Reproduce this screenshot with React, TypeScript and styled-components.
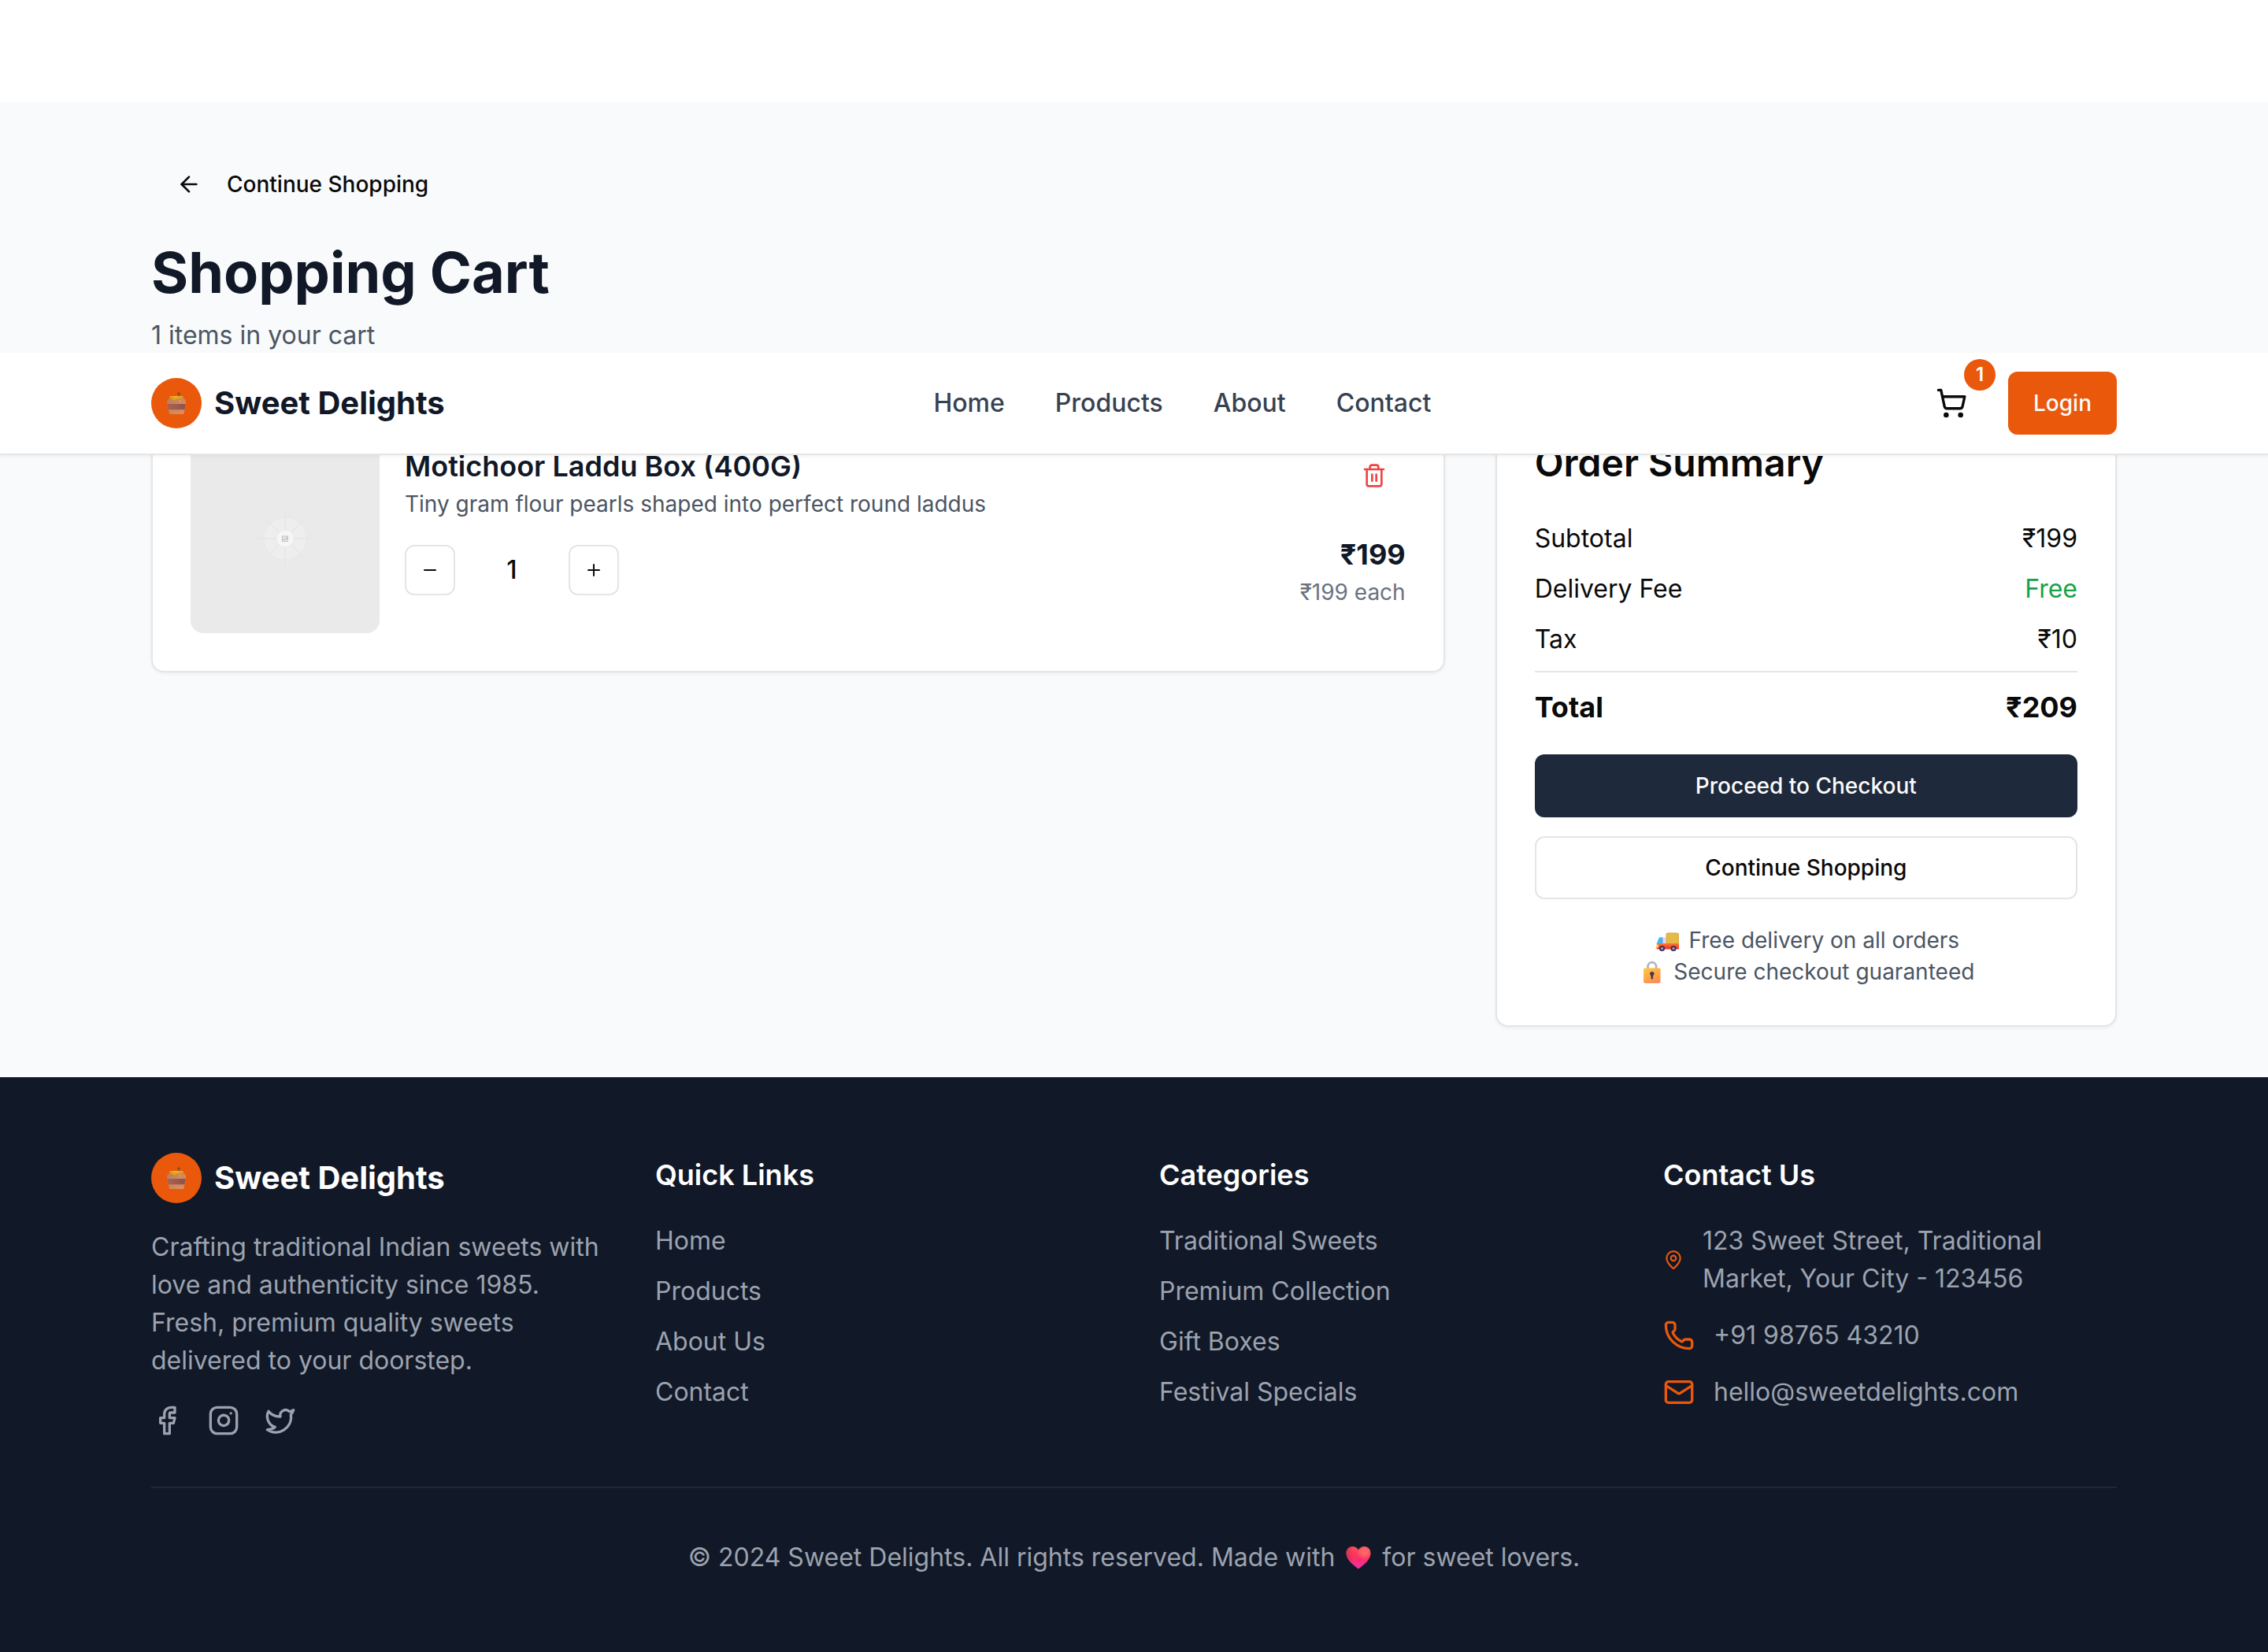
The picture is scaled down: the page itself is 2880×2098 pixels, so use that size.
import React from 'react';
import styled, { createGlobalStyle } from 'styled-components';
import {
  ArrowLeft,
  Facebook,
  Instagram,
  Mail,
  MapPin,
  Minus,
  Phone,
  Plus,
  ShoppingCart,
  Trash2,
  Twitter,
} from 'lucide-react';

const color = {
  ink: '#111827',
  text: '#0a0a0a',
  slate: '#374151',
  muted: '#4b5563',
  soft: '#6b7280',
  faint: '#9ca3af',
  line: '#e5e5e5',
  page: '#f9fafb',
  orange: '#ea580c',
  green: '#16a34a',
  red: '#ef4444',
  navy: '#1e293b',
};

const GlobalStyle = createGlobalStyle`
  *, *::before, *::after { box-sizing: border-box; }
  body {
    margin: 0;
    background: #ffffff;
    color: ${color.text};
    font-family: Inter, "Noto Sans", sans-serif;
    font-size: 32px;
    line-height: 48px;
  }
  h1, h2, h3, p, ul, dl, dd { margin: 0; padding: 0; }
  ul { list-style: none; }
  a { color: inherit; text-decoration: none; }
  button { font-family: inherit; cursor: pointer; }
  svg { display: block; flex-shrink: 0; }
`;

const Page = styled.div`
  position: relative;
  padding-top: 130px;
`;

const Container = styled.div`
  max-width: 2560px;
  margin: 0 auto;
  padding: 0 32px;
`;

/* Header, pinned over the cart while the page is scrolled */

const HeaderBar = styled.header`
  position: absolute;
  top: 448px;
  left: 0;
  right: 0;
  z-index: 10;
  background: #ffffff;
  border-bottom: 2px solid ${color.line};
  box-shadow: 0 2px 4px rgba(0, 0, 0, 0.05);
`;

const HeaderRow = styled(Container)`
  display: flex;
  align-items: center;
  justify-content: space-between;
  height: 128px;
`;

const Brand = styled.a<{ $light?: boolean }>`
  display: flex;
  align-items: center;
  gap: 16px;
  font-size: 40px;
  line-height: 56px;
  font-weight: 700;
  color: ${(p) => (p.$light ? '#ffffff' : color.ink)};
`;

const BrandMark = styled.span`
  display: flex;
  align-items: center;
  justify-content: center;
  width: 64px;
  height: 64px;
  border-radius: 50%;
  background: ${color.orange};
`;

const Nav = styled.nav`
  display: flex;
  gap: 64px;
  font-weight: 500;
  color: ${color.slate};
`;

const Actions = styled.div`
  display: flex;
  align-items: center;
  gap: 32px;
`;

const CartButton = styled.button`
  position: relative;
  display: flex;
  align-items: center;
  justify-content: center;
  width: 80px;
  height: 80px;
  padding: 0;
  border: 0;
  border-radius: 12px;
  background: transparent;
  color: ${color.text};
`;

const CartBadge = styled.span`
  position: absolute;
  top: -16px;
  right: -16px;
  display: flex;
  align-items: center;
  justify-content: center;
  width: 40px;
  height: 40px;
  border-radius: 50%;
  background: ${color.orange};
  color: #ffffff;
  font-size: 24px;
  line-height: 32px;
  font-weight: 600;
`;

/* Buttons */

type Tone = 'accent' | 'dark' | 'outline' | 'ghost';

const toneBackground: Record<Tone, string> = {
  accent: color.orange,
  dark: color.navy,
  outline: '#ffffff',
  ghost: 'transparent',
};

const Button = styled.button<{ $tone: Tone; $block?: boolean }>`
  display: flex;
  align-items: center;
  justify-content: center;
  gap: 32px;
  width: ${(p) => (p.$block ? '100%' : 'auto')};
  height: 80px;
  padding: 0 32px;
  border: ${(p) => (p.$tone === 'outline' ? `2px solid ${color.line}` : '0')};
  border-radius: 12px;
  background: ${(p) => toneBackground[p.$tone]};
  color: ${(p) => (p.$tone === 'accent' || p.$tone === 'dark' ? '#fafafa' : color.text)};
  font-size: 28px;
  line-height: 40px;
  font-weight: 500;
`;

const IconButton = styled.button<{ $small?: boolean }>`
  display: flex;
  align-items: center;
  justify-content: center;
  width: ${(p) => (p.$small ? '64px' : '80px')};
  height: ${(p) => (p.$small ? '64px' : '80px')};
  padding: 0;
  border: ${(p) => (p.$small ? `2px solid ${color.line}` : '0')};
  border-radius: 12px;
  background: #ffffff;
  color: ${(p) => (p.$small ? color.text : color.red)};
`;

/* Cart page */

const Main = styled.main`
  padding: 64px 0;
  background: ${color.page};
`;

const Intro = styled.div`
  display: flex;
  flex-direction: column;
  align-items: flex-start;
  margin-bottom: 64px;
`;

const Title = styled.h1`
  margin: 32px 0 16px;
  font-size: 72px;
  line-height: 80px;
  font-weight: 700;
  color: ${color.ink};
`;

const Count = styled.p`
  color: ${color.muted};
`;

const Columns = styled.div`
  display: grid;
  grid-template-columns: repeat(3, minmax(0, 1fr));
  align-items: start;
  gap: 64px;
`;

const Card = styled.section<{ $span?: number }>`
  grid-column: span ${(p) => p.$span ?? 1};
  padding: 48px;
  border: 2px solid ${color.line};
  border-radius: 16px;
  background: #ffffff;
  box-shadow: 0 2px 4px rgba(0, 0, 0, 0.05);
`;

const Item = styled.article`
  display: flex;
  gap: 32px;
`;

const Thumb = styled.div`
  flex-shrink: 0;
  width: 240px;
  height: 240px;
  overflow: hidden;
  border-radius: 16px;
`;

const ItemBody = styled.div`
  flex: 1;
  display: flex;
  flex-direction: column;
  gap: 16px;
`;

const Split = styled.div<{ $align?: string }>`
  display: flex;
  align-items: ${(p) => p.$align ?? 'center'};
  justify-content: space-between;
`;

const ItemName = styled.h3`
  font-size: 36px;
  line-height: 56px;
  font-weight: 600;
  color: ${color.ink};
`;

const SmallText = styled.p<{ $tone?: string }>`
  font-size: 28px;
  line-height: 40px;
  color: ${(p) => p.$tone ?? color.muted};
`;

const Stepper = styled.div`
  display: flex;
  align-items: center;
  gap: 24px;
`;

const Quantity = styled.output`
  width: 96px;
  text-align: center;
  font-weight: 500;
`;

const Prices = styled.div`
  text-align: right;
`;

const Price = styled.p`
  font-size: 36px;
  line-height: 56px;
  font-weight: 700;
  color: ${color.ink};
`;

const SummaryTitle = styled.h2`
  margin-bottom: 48px;
  font-size: 48px;
  line-height: 48px;
  font-weight: 600;
`;

const Lines = styled.dl`
  display: flex;
  flex-direction: column;
  gap: 16px;
  margin-bottom: 32px;
`;

const Amount = styled.dd<{ $free?: boolean }>`
  color: ${(p) => (p.$free ? color.green : 'inherit')};
`;

const TotalLine = styled(Split)`
  padding-top: 16px;
  border-top: 2px solid ${color.line};
  font-size: 36px;
  line-height: 56px;
  font-weight: 700;
`;

const Choices = styled.div`
  display: flex;
  flex-direction: column;
  gap: 24px;
  margin-bottom: 32px;
`;

const Assurance = styled(SmallText)`
  display: flex;
  align-items: center;
  justify-content: center;
  gap: 8px;
`;

/* Footer */

const FooterBar = styled.footer`
  padding: 96px 0;
  background: ${color.ink};
  color: ${color.faint};
`;

const FooterGrid = styled.div`
  display: grid;
  grid-template-columns: repeat(4, minmax(0, 1fr));
  gap: 64px;
`;

const About = styled.div`
  display: flex;
  flex-direction: column;
  gap: 32px;
`;

const Social = styled.div`
  display: flex;
  gap: 32px;
`;

const FooterHeading = styled.h3`
  margin-bottom: 32px;
  font-size: 36px;
  line-height: 56px;
  font-weight: 600;
  color: #ffffff;
`;

const FooterList = styled.ul<{ $gap: number }>`
  display: flex;
  flex-direction: column;
  gap: ${(p) => p.$gap}px;
`;

const ContactRow = styled.li`
  display: flex;
  align-items: center;
  gap: 24px;

  svg {
    color: ${color.orange};
  }
`;

const Copyright = styled.p`
  display: flex;
  align-items: center;
  justify-content: center;
  gap: 8px;
  margin-top: 64px;
  padding-top: 64px;
  border-top: 2px solid #1f2937;
`;

/* Drawings */

const HoneyPot = () => (
  <svg width="28" height="32" viewBox="0 0 28 32" aria-hidden="true">
    <defs>
      <linearGradient id="pot-clay" x1="0" y1="0" x2="1" y2="1">
        <stop offset="0" stopColor="#bd7a54" />
        <stop offset="0.5" stopColor="#cd865d" />
        <stop offset="1" stopColor="#dd9260" />
      </linearGradient>
      <linearGradient id="pot-band" x1="0" y1="0" x2="1" y2="0">
        <stop offset="0" stopColor="#a9634f" />
        <stop offset="1" stopColor="#91524d" />
      </linearGradient>
    </defs>
    <path d="M5.500 7h17.500v2.500c2 1.200 3 3 3 5.500 0 4.500-1.800 10.500-3 15H5.500C4.200 25.500 2 19.500 2 15c0-2.500 1.300-4.300 3.500-5.500z" fill="url(#pot-clay)" />
    <path d="M2.300 17h23.400c-.3 2.500-.8 4.800-1.400 7.200H3.900C3.200 21.800 2.600 19.500 2.300 17z" fill="url(#pot-band)" />
    <path d="M16.500 8V4.500" stroke="#9a5a30" strokeWidth="1.400" />
    <path d="M15.300 3.800c0-1 1-1.500 2-1.300 1.200.1 1.800 1 1.600 2-.2 1.100-1.200 1.600-2.200 1.400-1-.2-1.400-1.100-1.400-2.100z" fill="#8c4a24" />
    <path d="M5.500 7H22v1.500c0 1-1.200 1.500-2.700 1.500-1 0-1.200 1.200-2 1.200s-.8-1-2-1c-1 0-1.200 2.300-3.800 2.300-2 0-2-1.700-3.500-2C6.500 10.200 5.500 9.500 5.500 8z" fill="#e0a01c" />
    <path d="M9 7.300h9c-1 1.200-2.500 1.500-4.500 1.500S9.800 8.400 9 7.300z" fill="#f3bd28" />
    <path d="M18.700 11.500c.7.900 1 1.400 1 1.900a1 1 0 0 1-2 0c0-.5.300-1 1-1.900z" fill="#e9a922" />
  </svg>
);

const Truck = () => (
  <svg width="38" height="40" viewBox="0 0 38 40" aria-hidden="true">
    <defs>
      <linearGradient id="truck-chassis" x1="0" y1="0" x2="0" y2="1">
        <stop offset="0" stopColor="#ff7a2e" />
        <stop offset="1" stopColor="#ee2c34" />
      </linearGradient>
      <linearGradient id="truck-glass" x1="0" y1="0" x2="1" y2="1">
        <stop offset="0" stopColor="#2cc0ff" />
        <stop offset="1" stopColor="#5aa8f0" />
      </linearGradient>
    </defs>
    <path d="M8 16.500h9.500V26H4.500v-2z" fill="#e4d8ee" />
    <path d="M8 16.500h4.500V24H5z" fill="url(#truck-glass)" />
    <rect x="16.500" y="10.500" width="16.500" height="15" rx="2.500" fill="#dfb03c" />
    <rect x="18" y="12" width="13.500" height="12" rx="1" fill="#e6ba46" />
    <path d="M5 24h28v6.500a1 1 0 0 1-1 1H6a1.500 1.500 0 0 1-1.500-1.500z" fill="url(#truck-chassis)" />
    <rect x="4.500" y="25.500" width="2.500" height="4" rx="1" fill="#ffd84a" />
    <circle cx="11.500" cy="30.500" r="3.600" fill="#43304f" />
    <circle cx="11.500" cy="30.500" r="1.500" fill="#b9a6cc" />
    <circle cx="26" cy="30.500" r="3.600" fill="#43304f" />
    <circle cx="26" cy="30.500" r="1.500" fill="#b9a6cc" />
  </svg>
);

const Padlock = () => (
  <svg width="38" height="40" viewBox="0 0 38 40" aria-hidden="true">
    <defs>
      <linearGradient id="lock-body" x1="0" y1="0" x2="0.600" y2="1">
        <stop offset="0" stopColor="#ffcb3e" />
        <stop offset="1" stopColor="#ff8f4c" />
      </linearGradient>
    </defs>
    <path d="M13.500 17v-3.500a5.300 5.300 0 0 1 10.600 0V17" fill="none" stroke="#b9b2c2" strokeWidth="2.800" />
    <rect x="8" y="15.500" width="21.500" height="18.800" rx="1.800" fill="url(#lock-body)" />
    <path d="M9 33.800h19.500" stroke="#ef7444" strokeWidth="1" />
    <circle cx="18.800" cy="22.600" r="2.700" fill="#4a3550" />
    <rect x="17.500" y="23" width="2.600" height="6.400" rx="1.200" fill="#4a3550" />
  </svg>
);

const Heart = () => (
  <svg width="44" height="40" viewBox="0 0 44 40" role="img" aria-label="love">
    <defs>
      <linearGradient id="heart-fill" x1="0" y1="0" x2="0" y2="1">
        <stop offset="0" stopColor="#fb4e5c" />
        <stop offset="0.500" stopColor="#ff2f62" />
        <stop offset="1" stopColor="#ee2fae" />
      </linearGradient>
      <radialGradient id="heart-glow" cx="0.750" cy="0.250" r="0.350">
        <stop offset="0" stopColor="#ff7468" />
        <stop offset="1" stopColor="#ff7468" stopOpacity="0" />
      </radialGradient>
      <linearGradient id="heart-edge" x1="0" y1="0" x2="1" y2="0">
        <stop offset="0" stopColor="#b8304e" stopOpacity="0.700" />
        <stop offset="0.300" stopColor="#b8304e" stopOpacity="0" />
      </linearGradient>
    </defs>
    {['url(#heart-fill)', 'url(#heart-edge)', 'url(#heart-glow)'].map((fill) => (
      <path
        key={fill}
        d="M22 10.500c1.500-3 4.300-4.500 7.500-4.500 4.800 0 8 3.800 8 8.500 0 8.500-8.500 14.500-15.500 20C15 29 6.500 23 6.500 14.500c0-4.700 3.200-8.500 8-8.500 3.200 0 6 1.500 7.500 4.500z"
        fill={fill}
      />
    ))}
  </svg>
);

const PlaceholderPhoto = () => (
  <svg width="240" height="240" viewBox="0 0 240 240" role="img" aria-label="Motichoor Laddu Box (400G)">
    <defs>
      <radialGradient id="ray" gradientUnits="userSpaceOnUse" cx="120" cy="120" r="52">
        <stop offset="0.300" stopColor="#dedede" />
        <stop offset="0.550" stopColor="#e2e2e2" />
        <stop offset="1" stopColor="#e2e2e2" stopOpacity="0" />
      </radialGradient>
    </defs>
    <rect width="240" height="240" fill="#eaeaea" />
    <circle cx="120" cy="120" r="27" fill="#eeeeee" stroke="#e7e7e7" strokeWidth="0.800" />
    <path
      d="M82 120.010H158M120.010 82V158M82 82.010L158 158M158 82.010L82 158"
      stroke="url(#ray)"
      strokeWidth="0.900"
    />
    <circle cx="120" cy="120" r="11" fill="#f6f6f6" stroke="#e4e4e4" strokeWidth="0.600" />
    <rect x="116.500" y="117" width="7" height="6.500" fill="#e9e9e9" stroke="#b5b5b5" strokeWidth="0.800" />
    <path d="M117 122l2-1.500 1.200.8 1.800-2.500 1.500 2" fill="none" stroke="#a8a8a8" strokeWidth="0.800" />
  </svg>
);

/* Content */

const navLinks = ['Home', 'Products', 'About', 'Contact'];

const charges = [
  { label: 'Subtotal', value: '₹199' },
  { label: 'Delivery Fee', value: 'Free', free: true },
  { label: 'Tax', value: '₹10' },
];

const linkGroups = [
  { heading: 'Quick Links', links: ['Home', 'Products', 'About Us', 'Contact'] },
  {
    heading: 'Categories',
    links: ['Traditional Sweets', 'Premium Collection', 'Gift Boxes', 'Festival Specials'],
  },
];

const socials = [
  { name: 'Facebook', Icon: Facebook },
  { name: 'Instagram', Icon: Instagram },
  { name: 'Twitter', Icon: Twitter },
];

const Logo = ({ light }: { light?: boolean }) => (
  <Brand href="#" $light={light}>
    <BrandMark>
      <HoneyPot />
    </BrandMark>
    Sweet Delights
  </Brand>
);

const Header = () => (
  <HeaderBar>
    <HeaderRow>
      <Logo />
      <Nav aria-label="Main">
        {navLinks.map((label) => (
          <a key={label} href="#">
            {label}
          </a>
        ))}
      </Nav>
      <Actions>
        <CartButton type="button" aria-label="Cart">
          <ShoppingCart size={40} />
          <CartBadge>1</CartBadge>
        </CartButton>
        <Button type="button" $tone="accent">
          Login
        </Button>
      </Actions>
    </HeaderRow>
  </HeaderBar>
);

const CartItem = () => (
  <Card $span={2}>
    <Item>
      <Thumb>
        <PlaceholderPhoto />
      </Thumb>
      <ItemBody>
        <Split $align="flex-start">
          <div>
            <ItemName>Motichoor Laddu Box (400G)</ItemName>
            <SmallText>Tiny gram flour pearls shaped into perfect round laddus</SmallText>
          </div>
          <IconButton type="button" aria-label="Remove item">
            <Trash2 size={32} />
          </IconButton>
        </Split>
        <Split>
          <Stepper>
            <IconButton type="button" $small aria-label="Decrease quantity">
              <Minus size={24} />
            </IconButton>
            <Quantity>1</Quantity>
            <IconButton type="button" $small aria-label="Increase quantity">
              <Plus size={24} />
            </IconButton>
          </Stepper>
          <Prices>
            <Price>₹199</Price>
            <SmallText $tone={color.soft}>₹199 each</SmallText>
          </Prices>
        </Split>
      </ItemBody>
    </Item>
  </Card>
);

const Summary = () => (
  <Card>
    <SummaryTitle>Order Summary</SummaryTitle>
    <Lines>
      {charges.map((c) => (
        <Split key={c.label}>
          <dt>{c.label}</dt>
          <Amount $free={c.free}>{c.value}</Amount>
        </Split>
      ))}
      <TotalLine>
        <dt>Total</dt>
        <Amount>₹209</Amount>
      </TotalLine>
    </Lines>
    <Choices>
      <Button type="button" $tone="dark" $block>
        Proceed to Checkout
      </Button>
      <Button type="button" $tone="outline" $block>
        Continue Shopping
      </Button>
    </Choices>
    <Assurance>
      <Truck />
      Free delivery on all orders
    </Assurance>
    <Assurance>
      <Padlock />
      Secure checkout guaranteed
    </Assurance>
  </Card>
);

const Footer = () => (
  <FooterBar>
    <Container>
      <FooterGrid>
        <About>
          <Logo light />
          <p>
            Crafting traditional Indian sweets with love and authenticity since 1985. Fresh, premium quality sweets
            delivered to your doorstep.
          </p>
          <Social>
            {socials.map(({ name, Icon }) => (
              <a key={name} href="#" aria-label={name}>
                <Icon size={40} />
              </a>
            ))}
          </Social>
        </About>
        {linkGroups.map((group) => (
          <div key={group.heading}>
            <FooterHeading>{group.heading}</FooterHeading>
            <FooterList $gap={16}>
              {group.links.map((label) => (
                <li key={label}>
                  <a href="#">{label}</a>
                </li>
              ))}
            </FooterList>
          </div>
        ))}
        <div>
          <FooterHeading>Contact Us</FooterHeading>
          <FooterList $gap={24}>
            <ContactRow>
              <MapPin size={26} />
              <span>123 Sweet Street, Traditional Market, Your City - 123456</span>
            </ContactRow>
            <ContactRow>
              <Phone size={40} />
              <span>+91 98765 43210</span>
            </ContactRow>
            <ContactRow>
              <Mail size={40} />
              <span>hello@sweetdelights.com</span>
            </ContactRow>
          </FooterList>
        </div>
      </FooterGrid>
      <Copyright>
        © 2024 Sweet Delights. All rights reserved. Made with
        <Heart />
        for sweet lovers.
      </Copyright>
    </Container>
  </FooterBar>
);

export default function App() {
  return (
    <>
      <GlobalStyle />
      <Page>
        <Header />
        <Main>
          <Container>
            <Intro>
              <Button type="button" $tone="ghost">
                <ArrowLeft size={32} />
                Continue Shopping
              </Button>
              <Title>Shopping Cart</Title>
              <Count>1 items in your cart</Count>
            </Intro>
            <Columns>
              <CartItem />
              <Summary />
            </Columns>
          </Container>
        </Main>
        <Footer />
      </Page>
    </>
  );
}
